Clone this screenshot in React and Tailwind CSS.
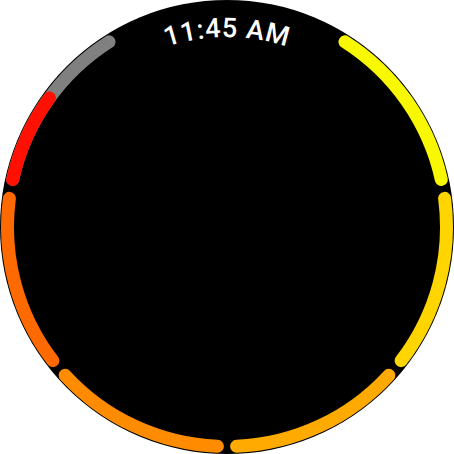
import React from "react";

const C = 227;
function pt(r, deg) {
  const a = (deg * Math.PI) / 180;
  return [C + r * Math.sin(a), C - r * Math.cos(a)];
}
function arc(r, a0, a1) {
  const [x0, y0] = pt(r, a0);
  const [x1, y1] = pt(r, a1);
  const large = a1 - a0 > 180 ? 1 : 0;
  return `M ${x0.toFixed(2)} ${y0.toFixed(2)} A ${r} ${r} 0 ${large} 1 ${x1.toFixed(2)} ${y1.toFixed(2)}`;
}

const R = 219.5;
const segs = [
  { a0: 32.5, a1: 77.5, c: "#F8F800" },
  { a0: 82.5, a1: 127.5, c: "#FFD500" },
  { a0: 132.5, a1: 177.5, c: "#FFAA00" },
  { a0: 182.5, a1: 227.5, c: "#FF8C00" },
  { a0: 232.5, a1: 277.5, c: "#FF6A00" },
  { a0: 282.5, a1: 327.5, c: "#808080" },
  { a0: 282.5, a1: 306, c: "#FF1000" },
];

export default function App() {
  const tr = 190;
  const [lx, ly] = pt(tr, -90);
  const [rx, ry] = pt(tr, 90);
  const textPath = `M ${lx} ${ly} A ${tr} ${tr} 0 0 1 ${rx} ${ry}`;
  return (
    <div className="w-[454px] h-[454px] bg-white">
      <div className="relative w-[454px] h-[454px] rounded-full bg-black overflow-hidden">
        <svg className="absolute inset-0" width="454" height="454" viewBox="0 0 454 454">
          <defs>
            <path id="timePath" d={textPath} fill="none" />
          </defs>
          {segs.map((s, i) => (
            <path
              key={i}
              d={arc(R, s.a0, s.a1)}
              fill="none"
              stroke={s.c}
              strokeWidth="13"
              strokeLinecap="round"
            />
          ))}
          <text
            fill="#ffffff"
            fontFamily="Roboto, 'Noto Sans', sans-serif"
            fontSize="27"
            fontWeight="500"
            letterSpacing="0.7"
          >
            <textPath href="#timePath" startOffset="50%" textAnchor="middle">
              11:45 AM
            </textPath>
          </text>
        </svg>
      </div>
    </div>
  );
}
